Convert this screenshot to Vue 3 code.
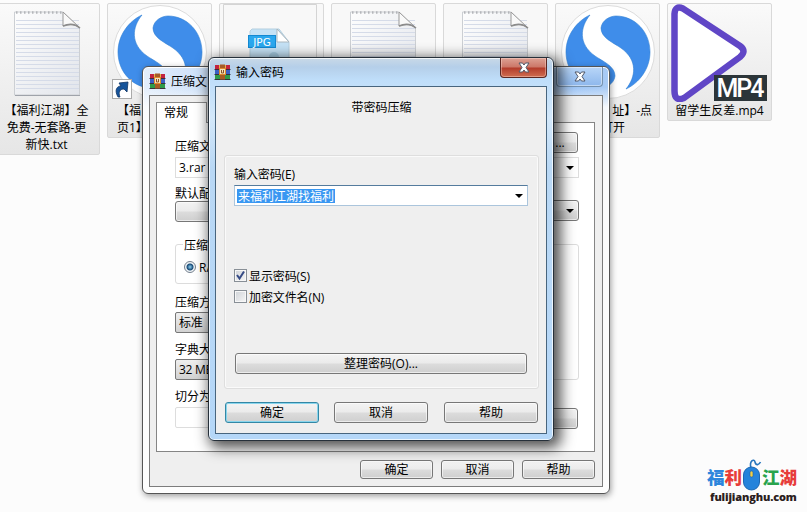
<template>
  <div class="desktop">
    <div class="files">
      <div v-for="(file, index) in files" :key="index" :class="`file ${file.kind}`">
        <div class="thumb">
          <svg v-if="file.icon == 'text'" width="70" height="90" viewBox="0 0 70 90">
            <defs>
              <linearGradient :id="'paper' + index" x1="0" y1="0" x2="1" y2="1">
                <stop offset="0" stop-color="#fdfdfd" />
                <stop offset="1" stop-color="#e2e5eb" />
              </linearGradient>
            </defs>
            <path d="M1.500 4H50L66.500 20V87H1.500Z" :fill="`url(#paper${index})`" stroke="#cccfd3" />
            <path d="M2 87.500H67" stroke="#9fa3aa" />
            <path v-for="n in 18" :key="n" :d="`M3 ${8.5 + n * 4}H66`" stroke="#d5dbe8" stroke-width="1" />
            <path d="M3 4.500H50" stroke="#b4b6ba" stroke-width="2.500" stroke-dasharray="1.500 2.500" />
            <path d="M50 4V18Q60 14 67 20Z" fill="#f9f9f9" stroke="#999" />
            <path d="M50 18Q60 14 67 20" fill="none" stroke="#8c8c8c" stroke-width="1.600" />
          </svg>
          <svg v-else-if="file.icon == 'browser'" class="big" width="100" height="100" viewBox="-50 -50 100 100">
            <circle r="46.500" fill="#fff" stroke="#dcdcdc" />
            <path :d="blob" fill="#3f8dea" stroke="#2f7fd4" stroke-width="0.600" />
            <path :d="blob" transform="rotate(180)" fill="#3f8dea" stroke="#2f7fd4" stroke-width="0.600" />
          </svg>
          <svg v-else-if="file.icon == 'jpg'" class="big" width="100" height="100" viewBox="0 0 100 100">
            <path d="M1.500 100V2.500H94.500V100" stroke="#d4d4d4" fill="none" />
            <path d="M30 27H57L67 40V95H28V29Z" fill="#c5e2f6" stroke="#b4cfdf" />
            <path d="M55 27V40H67Z" fill="#fff" stroke="#aab6bd" />
            <circle cx="52" cy="55" r="5" fill="#a7cde4" />
            <rect x="26.500" y="33.500" width="27" height="12" fill="#2aa7ee" stroke="#1489d2" />
            <text x="40" y="43.500" text-anchor="middle" class="jpg-text">JPG</text>
          </svg>
          <svg v-else class="big" width="100" height="100" viewBox="0 0 100 100">
            <path d="M4.500 12Q5 3 13 6.500L70 44Q77 49 70 55L14 96Q4.500 100 4.500 89Z" fill="#fff" stroke="#6046c6" stroke-width="6.500" />
            <rect x="44" y="73" width="53" height="26" fill="#2c3539" />
            <text x="70.500" y="95" text-anchor="middle" textLength="48" class="mp4-text">MP4</text>
          </svg>
          <svg v-if="file.shortcut" class="shortcut" width="20" height="20" viewBox="0 0 20 20">
            <rect x="0.500" y="0.500" width="19" height="19" fill="#fff" stroke="#aaa" />
            <path d="M6 18C2 11 5 7 9 7L7 4L16 3L15 13L12 10C8 10 6 13 8 18Z" fill="#16549b" stroke="#0e3364" stroke-width="0.800" />
          </svg>
        </div>
        <div class="name">
          <div v-for="line in file.lines" :key="line">{{ line }}</div>
        </div>
      </div>
    </div>

    <section class="window options">
      <header class="title">
        <svg class="rar" width="17" height="16" viewBox="0 0 17 16"><use href="#books" /></svg>
        <span class="caption">压缩文</span>
        <span class="close"><svg width="12" height="11" viewBox="0 0 12 11"><path :d="cross" /></svg></span>
      </header>
      <div class="client">
        <div class="tab">常规</div>
        <div class="panel">
          <div class="row first">
            <span>压缩文</span>
            <button class="small">...</button>
          </div>
          <div class="archive"><span>3.rar</span><i class="arrow"></i></div>
          <div class="label">默认配</div>
          <div class="row profile">
            <button></button>
            <button class="drop"><i class="arrow"></i></button>
          </div>
          <div class="columns">
            <div class="left">
              <div class="format">
                <span class="legend">压缩</span>
                <div class="radio"><i></i>RA</div>
              </div>
              <div v-for="item in settings" :key="item.label">
                <div class="label">{{ item.label }}</div>
                <div :class="item.edit ? 'edit' : 'select'">{{ item.value }}</div>
              </div>
            </div>
            <div class="right">
              <div class="box"></div>
              <button></button>
            </div>
          </div>
        </div>
        <footer>
          <button v-for="name in buttons" :key="name">{{ name }}</button>
        </footer>
      </div>
    </section>

    <section class="window password">
      <header class="title">
        <svg class="rar" width="17" height="16" viewBox="0 0 17 16">
          <g id="books">
            <rect x="1" y="1" width="15" height="4.500" fill="#c2243f" />
            <rect x="1" y="6" width="15" height="4.500" fill="#3a5fc4" />
            <rect x="1" y="11" width="15" height="4.500" fill="#2f9a49" />
            <path d="M0.500 5.500H16.500M0.500 10.500H16.500M0.500 15.500H16.500" stroke="#2f2430" stroke-width="0.900" />
            <rect x="6" y="0.500" width="5" height="15" fill="#a85c26" />
            <path d="M5.500 1V5M11.500 1V5" stroke="#e3b64a" />
            <rect x="5.500" y="4.500" width="6" height="6" fill="#f5e3bb" stroke="#e08a2c" />
            <path d="M7.500 6V9H9.500V6" fill="none" stroke="#8b5226" />
          </g>
        </svg>
        <span class="caption">输入密码</span>
        <span class="close"><svg width="12" height="11" viewBox="0 0 12 11"><path :d="cross" /></svg></span>
      </header>
      <div class="client">
        <div class="heading">带密码压缩</div>
        <div class="group">
          <div class="prompt">输入密码(E)</div>
          <div class="combo"><span>{{ password }}</span><i class="arrow"></i></div>
          <div class="checks">
            <label v-for="option in options" :key="option.text">
              <span class="check">
                <svg v-if="option.checked" width="11" height="11" viewBox="0 0 11 11">
                  <path d="M2 5L4.500 8.500L9 1.500" fill="none" stroke="#354a85" stroke-width="2" />
                </svg>
              </span>
              {{ option.text }}
            </label>
          </div>
          <button class="organize">整理密码(O)...</button>
        </div>
        <footer>
          <button v-for="(name, index) in buttons" :key="name" :class="{ primary: index == 0 }">{{ name }}</button>
        </footer>
      </div>
    </section>

    <div class="brand">
      <div class="brand-name">
        <span class="blue">福</span><span class="red">利</span>
        <svg width="20" height="33" viewBox="0 0 20 33">
          <path d="M9 10C7 3 12 0 13 4C14 8 17 7 18.500 4" fill="none" stroke="#2876bd" stroke-width="1.600" />
          <rect x="1.500" y="9" width="16" height="23" rx="8" fill="#2583db" stroke="#1e69b4" />
          <rect x="8" y="13" width="3" height="6" rx="1.500" fill="#f2cf45" stroke="#1c5d9f" stroke-width="0.600" />
        </svg>
        <span class="green">江</span><span class="red">湖</span>
      </div>
      <div class="brand-url">fulijianghu.com</div>
    </div>
  </div>
</template>

<script setup>
import { ref } from 'vue';

const files = ref([
  { icon: 'text', kind: 'tall', lines: ['【福利江湖】全', '免费-无套路-更', '新快.txt'] },
  { icon: 'browser', kind: 'start', shortcut: true, lines: ['【福', '页1】'] },
  { icon: 'jpg', kind: 'plain', lines: [] },
  { icon: 'text', kind: 'plain', lines: [] },
  { icon: 'text', kind: 'plain', lines: [] },
  { icon: 'browser', kind: 'end', lines: ['址】-点', '打开'] },
  { icon: 'mp4', kind: 'short', lines: ['留学生反差.mp4'] }
])

const settings = ref([
  { label: '压缩方', value: '标准' },
  { label: '字典大', value: '32 MB' },
  { label: '切分为', value: '', edit: true }
])

const options = ref([
  { text: '显示密码(S)', checked: true },
  { text: '加密文件名(N)', checked: false }
])

const buttons = ['确定', '取消', '帮助']
const password = ref('来福利江湖找福利')

// one half of the round browser logo, the other half is the same turned by 180deg
const blob = 'M18 37C28 25 30 8 13 -4C6 -9 -7 -14 -7 -24C-6 -32 2 -36 8 -36C27 -36 42 -20 42 0C42 17 31 31 18 37Z'
const cross = 'M1 1H4.500L6 3L7.500 1H11L8 5.500L11 10H7.500L6 8L4.500 10H1L4 5.500Z'
</script>

<style>
body{
  background: #fcfcfc;
  overflow: hidden;
}
</style>

<style scoped>
.desktop{
  position: relative;
  width: 807px;
  height: 512px;
  overflow: hidden;
  background: #fcfcfc;
  font-family: "Open Sans", "Noto Sans CJK SC", sans-serif;
  font-size: 12px;
  color: #000;
}
.desktop *{
  box-sizing: border-box;
}
.files{
  display: flex;
  align-items: flex-start;
  gap: 7px;
  margin-left: -5px;
  padding-top: 3px;
}
.file{
  flex: none;
  width: 105px;
  height: 135px;
  border: 1px solid #d9d9d9;
  border-radius: 2px;
  background: linear-gradient(#fafafa, #e6e6e6);
}
.file.tall{
  height: 152px;
}
.file.short{
  height: 118px;
}
.file.plain{
  background: #f8f8f8;
}
.thumb{
  position: relative;
  height: 98px;
  display: flex;
  justify-content: center;
  padding-top: 4px;
}
.thumb svg{
  flex: none;
}
.thumb .big{
  margin-top: -6px;
}
.thumb .shortcut{
  position: absolute;
  left: 4px;
  top: 75px;
}
.jpg-text{
  font: 10.5px "DejaVu Sans", sans-serif;
  fill: #fff;
}
.mp4-text{
  font: 500 25px Roboto, sans-serif;
  fill: #fff;
}
.name{
  line-height: 17px;
  text-align: center;
  white-space: nowrap;
}
.tall .name{
  padding-right: 2px;
}
.start .name{
  text-align: left;
  padding-left: 9px;
}
.end .name{
  text-align: right;
  padding-right: 7px;
}
.end .name div:last-child{
  padding-right: 27px;
}
.window{
  position: absolute;
  display: flex;
  flex-direction: column;
  padding: 0 6px 6px;
  border: 1px solid #26303a;
  border-radius: 6px;
}
.options{
  left: 142px;
  top: 66px;
  width: 468px;
  height: 428px;
  border-color: #555;
  background:
    linear-gradient(rgba(255,255,255,0) 20px, rgba(253,253,253,.9) 40px, #fdfdfd 70px),
    linear-gradient(90deg, #e3eefb 0, #cfe2f9 12%, #cfe2f9 85%, #9cc4f5 92%, #a9cbf5 100%);
  box-shadow: inset 0 0 0 1px #fff, 1px 2px 6px rgba(0,0,0,.38);
}
.password{
  left: 208px;
  top: 57px;
  width: 346px;
  height: 384px;
  background: linear-gradient(#c9d9e7 0, #b5cfe9 9px, #bfdefa 22px, #d3e8fa 60px, #b9d8f5 110px, #b5d7f8 100%);
  box-shadow: inset 0 0 0 1px rgba(255,255,255,.75), 4px 4px 14px 3px rgba(0,0,0,.68);
}
.title{
  flex: none;
  height: 28px;
  display: flex;
  align-items: center;
}
.password .title{
  margin: 0 0 0 -1px;
}
.rar{
  margin-right: 5px;
}
.caption{
  flex: 1;
}
.close{
  align-self: flex-start;
  display: flex;
  align-items: center;
  justify-content: center;
  width: 47px;
  height: 20px;
  border: 1px solid #7792ae;
  border-top: 0;
  border-radius: 0 0 4px 4px;
  background: linear-gradient(#b9d6f8, #8db7ec);
  box-shadow: inset 0 0 0 1px rgba(255,255,255,.45);
}
.password .close{
  border-color: #5b2722;
  background: linear-gradient(#dda194 0, #cc7768 9px, #b33c2b 10px, #cf6d51 100%);
  box-shadow: inset 0 0 0 1px rgba(255,225,215,.4);
}
.close path{
  fill: #fff;
  stroke: #525969;
  stroke-width: 1;
}
.client{
  flex: 1;
  border: 1px solid #7c7c7c;
  background: #efefef;
}
.password .client{
  border-color: #48657e;
}
button{
  display: block;
  height: 21px;
  padding: 0;
  border: 1px solid #777;
  border-radius: 3px;
  background: linear-gradient(#f3f3f3 0, #ebebeb 48%, #dcdcdc 52%, #cfcfcf 100%);
  box-shadow: inset 0 0 0 1px rgba(255,255,255,.6);
  font: inherit;
  line-height: 20px;
  text-align: center;
  color: #000;
}
.arrow{
  border: 4px solid transparent;
  border-top-color: #000;
  border-bottom: 0;
}
.options .client{
  padding: 6px 7px 0 6px;
}
.tab{
  position: relative;
  width: 51px;
  height: 21px;
  margin-bottom: -1px;
  padding-left: 7px;
  line-height: 20px;
  border: 1px solid #8a8a8a;
  border-bottom: 0;
  background: #fff;
}
.panel{
  height: 330px;
  padding: 0 15px 0 18px;
  border: 1px solid #858585;
  background: #fff;
}
.row{
  display: flex;
  justify-content: space-between;
}
.row.first{
  height: 34px;
  padding-top: 9px;
}
.row.first span{
  padding-top: 6px;
  line-height: 18px;
}
.row .small{
  width: 36px;
  margin-right: 1px;
  line-height: 17px;
}
.archive{
  display: flex;
  align-items: center;
  justify-content: space-between;
  height: 21px;
  padding: 0 4px 0 3px;
  border: 1px solid #ddd;
}
.panel > .label{
  margin-top: 6px;
  height: 17px;
  line-height: 19px;
}
.profile button{
  width: 80px;
}
.profile .drop{
  display: flex;
  align-items: center;
  justify-content: flex-end;
  margin-top: -1px;
  padding-right: 4px;
}
.columns{
  display: flex;
  justify-content: space-between;
  margin-top: 22px;
}
.left, .right{
  width: 150px;
}
.format{
  height: 40px;
  margin-bottom: 9px;
  padding-left: 7px;
  border: 1px solid #dcdcdc;
  border-radius: 3px;
}
.legend{
  display: block;
  width: 28px;
  margin-top: -8px;
  padding-left: 1px;
  line-height: 18px;
  background: #fff;
}
.radio{
  display: flex;
  align-items: center;
  height: 24px;
  gap: 3px;
  padding-left: 1px;
}
.radio i{
  width: 12px;
  height: 12px;
  border: 1px solid #74808e;
  border-radius: 50%;
  background: radial-gradient(circle, #8ed2f2 0, #174976 3px, #f2f5f7 4px);
}
.left .label{
  height: 19px;
  line-height: 20px;
}
.select, .edit{
  height: 21px;
  margin-bottom: 7px;
  padding-left: 3px;
  line-height: 20px;
  letter-spacing: -0.3px;
  border: 1px solid #777;
  border-radius: 2px;
  background: linear-gradient(#efefef, #d2d2d2);
}
.edit{
  margin-top: 1px;
  border-color: #ddd;
  background: #fff;
}
.box{
  height: 136px;
  margin-bottom: 28px;
  border: 1px solid #dcdcdc;
  border-radius: 3px;
}
.right button{
  width: 149px;
}
footer{
  display: flex;
}
.options footer{
  justify-content: flex-end;
  gap: 8px;
  padding-top: 8px;
}
.options footer button{
  width: 73px;
  height: 19px;
  line-height: 18px;
}
.heading{
  height: 40px;
  padding-left: 1px;
  line-height: 42px;
  text-align: center;
}
.group{
  height: 234px;
  margin: 28px 7px 0 8px;
  padding: 9px 10px 0 9px;
  border: 1px solid #dedede;
  border-radius: 3px;
  box-shadow: inset 0 0 0 1px #fafafa;
}
.prompt{
  height: 20px;
  line-height: 20px;
  letter-spacing: -0.1px;
}
.combo{
  display: flex;
  align-items: center;
  justify-content: space-between;
  height: 21px;
  padding: 0 4px 0 2px;
  border: 1px solid #abc5dc;
  border-top-color: #547b9d;
  background: #fff;
}
.combo span{
  height: 14px;
  padding: 0 1px;
  line-height: 15px;
  color: #fff;
  background: #3997f2;
}
.checks{
  margin-top: 59px;
  letter-spacing: -0.1px;
}
.checks label{
  display: flex;
  align-items: center;
  gap: 2px;
  height: 21px;
}
.check{
  display: flex;
  width: 13px;
  height: 13px;
  border: 1px solid #888f96;
  background: linear-gradient(135deg, #cfd3d8, #f6f6f6);
  box-shadow: inset 0 0 0 1px #f7f7f7;
}
.password .organize{
  width: 292px;
  margin: 46px 0 0 1px;
}
.password footer{
  gap: 15px;
  padding: 13px 0 0 9px;
}
.password footer button{
  width: 94px;
}
.password footer button:last-child{
  margin-left: 1px;
}
.password footer .primary{
  border-color: #3387a5;
  box-shadow: inset 0 0 0 1px #88d5ed;
}
.brand{
  position: absolute;
  left: 707px;
  top: 457px;
  width: 92px;
}
.brand-name{
  display: flex;
  align-items: center;
  height: 34px;
  font: 900 17.5px/34px "Noto Sans CJK SC", sans-serif;
}
.brand-name span{
  padding-top: 6px;
}
.brand-name svg{
  flex: none;
}
.blue{
  color: #2d86dc;
}
.red{
  color: #e73d3a;
}
.green{
  color: #28a34c;
}
.brand-url{
  height: 14px;
  margin-left: 3px;
  font: 800 11px/12px "Open Sans", sans-serif;
  letter-spacing: -0.15px;
  color: #2b2020;
}
</style>
